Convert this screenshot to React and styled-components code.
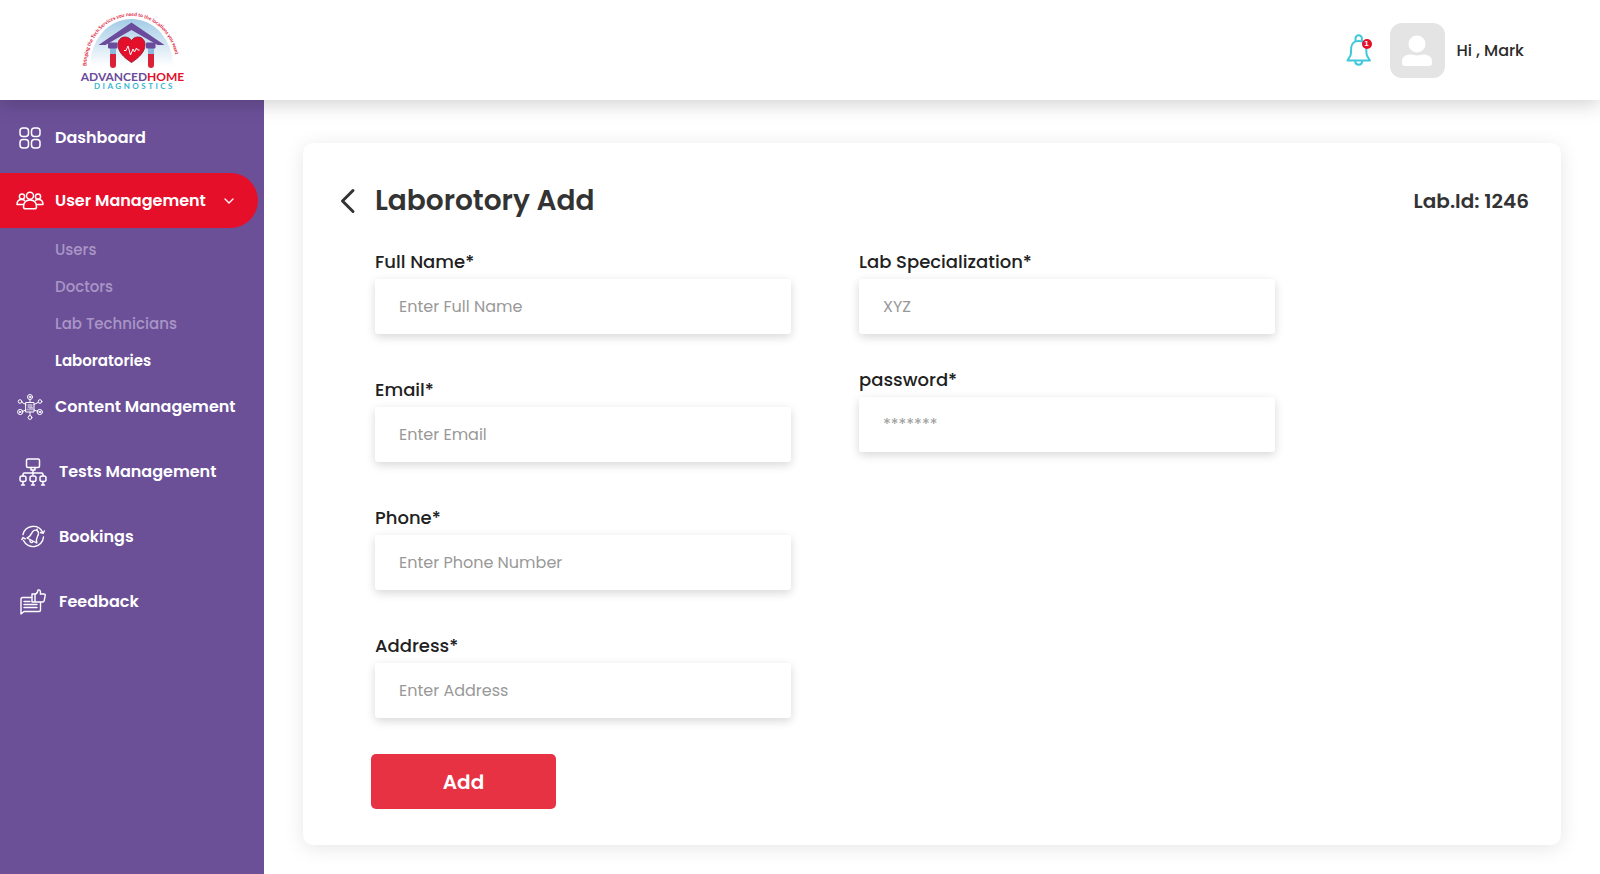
import React from "react";
import styled, { createGlobalStyle, css } from "styled-components";

const GlobalStyle = createGlobalStyle`
  *, *::before, *::after { box-sizing: border-box; }
  body {
    margin: 0;
    background: #fff;
    font-family: Poppins, Inter, "Liberation Sans", sans-serif;
    color: #212121;
  }
`;

const Page = styled.div`
  display: flex;
  flex-direction: column;
  min-height: 100vh;
`;

const TopBar = styled.header`
  position: relative;
  z-index: 1;
  display: flex;
  align-items: center;
  justify-content: space-between;
  height: 100px;
  padding: 0 76px 0 80px;
  background: #fff;
  box-shadow: 0 3px 20px rgba(0, 0, 0, 0.2);
`;

const LogoLink = styled.a`
  display: block;
  svg { display: block; }
`;

const Account = styled.div`
  display: flex;
  align-items: center;
`;

const BellButton = styled.button`
  position: relative;
  display: flex;
  margin-right: 18px;
  padding: 0;
  border: 0;
  background: none;
`;

const Badge = styled.span`
  position: absolute;
  top: 5px;
  right: 0;
  width: 10px;
  height: 10px;
  border-radius: 50%;
  background: #e60f29;
  color: #fff;
  font-size: 8px;
  font-weight: 700;
  line-height: 10px;
  text-align: center;
`;

const Avatar = styled.div`
  display: flex;
  align-items: center;
  justify-content: center;
  width: 55px;
  height: 55px;
  margin-right: 12px;
  border-radius: 12px;
  background: #e4e4e4;
`;

const Greeting = styled.span`
  padding-top: 2px;
  font-size: 16px;
  font-weight: 500;
  line-height: 24px;
  color: #2b2b2b;
`;

const Body = styled.div`
  display: flex;
  flex: 1;
`;

const Sidebar = styled.nav`
  flex: none;
  width: 264px;
  padding-top: 10px;
  background: #6b5098;
`;

const NavList = styled.ul`
  display: flex;
  flex-direction: column;
  gap: ${(p) => p.$gap}px;
  margin: 0;
  padding: 0;
  list-style: none;
`;

const NavLink = styled.a`
  display: flex;
  align-items: center;
  gap: ${(p) => (p.$inset ? 12 : 11)}px;
  height: 55px;
  margin-right: 6px;
  padding-left: ${(p) => (p.$inset ? 19 : 16)}px;
  border-radius: 0 28px 28px 0;
  color: #fff;
  font-size: 16px;
  font-weight: 600;
  text-decoration: none;
  white-space: nowrap;
  ${(p) => p.$active && css`background: #e60f29;`}
`;

const IconSlot = styled.span`
  display: flex;
  justify-content: center;
  flex: none;
  width: 28px;
`;

const Caret = styled.svg`
  margin: 0 24px 0 auto;
`;

const SubList = styled.ul`
  margin: 0;
  padding: 3px 0 0 55px;
  list-style: none;
`;

const SubLink = styled.a`
  display: block;
  color: ${(p) => (p.$current ? "#fff" : "#a996c6")};
  font-size: 15px;
  font-weight: ${(p) => (p.$current ? 600 : 500)};
  line-height: 37px;
  text-decoration: none;
`;

const Main = styled.main`
  flex: 1;
  min-width: 0;
  padding: 43px 39px 29px;
`;

const Card = styled.section`
  padding: 37px 32px 36px 36px;
  border-radius: 10px;
  background: #fff;
  box-shadow: 0 3px 20px rgba(0, 0, 0, 0.1);
`;

const CardHead = styled.div`
  display: flex;
  align-items: center;
  margin-bottom: 26px;
`;

const BackButton = styled.button`
  display: flex;
  align-items: center;
  width: 36px;
  height: 42px;
  padding: 0;
  border: 0;
  background: none;
`;

const Title = styled.h1`
  flex: 1;
  margin: 0;
  color: #333;
  font-size: 28px;
  font-weight: 600;
  line-height: 42px;
`;

const LabId = styled.span`
  color: #333;
  font-size: 20px;
  font-weight: 600;
  line-height: 30px;
`;

const Form = styled.form`
  padding-left: 32px;
`;

const Columns = styled.div`
  display: grid;
  grid-template-columns: repeat(2, minmax(0, 416px));
  gap: 68px;
  padding-left: 4px;
`;

const Column = styled.div`
  display: flex;
  flex-direction: column;
  gap: ${(p) => p.$gap}px;
`;

const FieldBox = styled.div`
  display: flex;
  flex-direction: column;
  gap: 4px;
`;

const Label = styled.label`
  color: #212121;
  font-size: 18px;
  font-weight: 500;
  line-height: 27px;
`;

const Input = styled.input`
  width: 100%;
  height: 55px;
  padding: 0 24px;
  border: 0;
  border-radius: 3px;
  background: #fff;
  box-shadow: 0 3px 10px rgba(0, 0, 0, 0.16);
  color: #212121;
  font-family: inherit;
  font-size: 16px;
  &::placeholder { color: #999; opacity: 1; }
`;

const SubmitButton = styled.button`
  display: block;
  width: 185px;
  height: 55px;
  margin-top: 36px;
  border: 0;
  border-radius: 5px;
  background: #e73244;
  color: #fff;
  font-family: inherit;
  font-size: 20px;
  font-weight: 600;
`;

const Logo = () => (
  <svg width="106" height="84" viewBox="0 0 106 84" overflow="visible" role="img" aria-label="Advanced Home Diagnostics">
    <defs>
      <linearGradient id="dome" x1="0" y1="0" x2="0" y2="1">
        <stop offset="0" stopColor="#a3cbe6" />
        <stop offset="1" stopColor="#fff" />
      </linearGradient>
      <path id="arc" d="M6.500 58 A 45 50 0 0 1 96.500 58" />
    </defs>
    <path d="M10 58a41.500 47 0 0 1 83 0z" fill="url(#dome)" />
    <text fill="#e0213c" fontFamily="Lato, sans-serif" fontSize="5" fontWeight="700">
      <textPath href="#arc">Bringing the Tech Services you need to the locations you want</textPath>
    </text>
    <path d="M51.500 14.500L84.500 37h-7L51.500 22 25.500 37h-7z" fill="#6a4b9c" />
    {[28, 66].map((x) => (
      <g key={x}>
        <path d={`M${x + 2} 40h6v17a3 3 0 0 1-6 0z`} fill="#d92238" />
        <path d={`M${x + 2} 40h6v6h-6z`} fill="#8cb9de" />
        <rect x={x} y="34.500" width="9.500" height="6" rx="1" fill="#6a4b9c" />
      </g>
    ))}
    <path d="M51.500 54.500C44 49.500 38 44 38 36.500 38 28.500 47.500 26.500 51.500 32.500 55.500 26.500 65 28.500 65 36.500 65 44 59 49.500 51.500 54.500z" fill="#e30f2b" stroke="#9c2038" />
    <path d="M44 42.500h2l2-4.500 2.500 9 2.500-6 1.500 3 2-4 1 2h2" fill="none" stroke="#fff" />
    <text x="52.500" y="73" textAnchor="middle" fontFamily="Lato, sans-serif" fontSize="12" fontWeight="700" fill="#6a4b9c">
      ADVANCED<tspan fill="#e30f2b">HOME</tspan>
    </text>
    <text x="54.500" y="81" textAnchor="middle" fontFamily="Lato, sans-serif" fontSize="8" fontWeight="700" letterSpacing="2.500" fill="#38b6cf">
      DIAGNOSTICS
    </text>
  </svg>
);

const BellIcon = () => (
  <svg width="26" height="32" viewBox="0 0 26 32" fill="none" stroke="#3fc8da" strokeWidth="2" strokeLinejoin="round">
    <path d="M9.500 7V4.500a3.200 3.200 0 0 1 6.400 0V7" />
    <path d="M1.500 26.500l3-5c.7-2 .5-5 .7-8C5.500 9.500 8.500 7 12.700 7s7.200 2.500 7.500 6.500c.2 3 0 6 .7 8l3 5z" />
    <path d="M9 27c.4 2.400 1.800 3.700 3.700 3.700s3.300-1.300 3.700-3.700" />
  </svg>
);

const PersonIcon = () => (
  <svg width="30" height="31" viewBox="0 0 30 31" fill="#fff">
    <circle cx="15" cy="9" r="8.500" />
    <path d="M0 26.500C0 21.500 4 19.500 8.500 19.500c2 0 3.500 1 6.500 1s4.500-1 6.500-1C26 19.500 30 21.500 30 26.500V28c0 2-1 3-3 3H3c-2 0-3-1-3-3z" />
  </svg>
);

const stroke = { fill: "none", stroke: "#fff", strokeLinecap: "round", strokeLinejoin: "round" };

const DashboardIcon = () => (
  <svg width="22" height="22" viewBox="0 0 22 22" {...stroke} strokeWidth="1.500">
    <rect x="1" y="1" width="8.500" height="8.500" rx="3" />
    <rect x="12.500" y="1" width="8.500" height="8.500" rx="3" />
    <rect x="1" y="12.500" width="8.500" height="8.500" rx="3" />
    <rect x="12.500" y="12.500" width="8.500" height="8.500" rx="3" />
  </svg>
);

const UsersIcon = () => (
  <svg width="28" height="20" viewBox="0 0 28 20" {...stroke} strokeWidth="1.500">
    <circle cx="14" cy="4.800" r="3.500" />
    <circle cx="6" cy="5.500" r="2.600" />
    <circle cx="22" cy="5.500" r="2.600" />
    <path d="M7.500 16c0-5 2.500-7 6.500-7s6.500 2 6.500 7c0 1.200-.8 1.800-2 1.800h-9c-1.200 0-2-.6-2-1.800z" />
    <path d="M6.500 13.500H1c0-3.500 1.700-5 4.700-5 1.200 0 2 .2 2.800.8M21.500 13.500H27c0-3.500-1.700-5-4.700-5-1.200 0-2 .2-2.800.8" />
  </svg>
);

const ContentIcon = () => (
  <svg width="26" height="26" viewBox="0 0 26 26" {...stroke} strokeWidth="1">
    <rect x="9" y="8.500" width="8" height="9.500" />
    <path d="M11 11h4M11 13h4M11 16v-1M13 16v-2M15 16v-2.500M13 5.500v3M13 18v3.500M9 10.500L5 8.500M17 10.500l4-2M9 16l-4 1.500M17 16l4 1.500" />
    <circle cx="13" cy="3" r="2.500" />
    <circle cx="13" cy="3" r="0.800" />
    <circle cx="13" cy="23.500" r="1.900" />
    <circle cx="3" cy="7.500" r="1.800" />
    <circle cx="23" cy="7.500" r="1.800" />
    <circle cx="3.200" cy="18" r="2.600" />
    <circle cx="22.800" cy="18" r="2.600" />
    <path d="M2.300 17.200l1.800 1.600M4.100 17.200l-1.800 1.600M21.900 17.200l1.800 1.600M23.700 17.200l-1.800 1.600" />
  </svg>
);

const TestsIcon = () => (
  <svg width="28" height="28" viewBox="0 0 28 28" {...stroke} strokeWidth="1.500">
    <rect x="7.500" y="1" width="13" height="8.500" rx="1.500" />
    <path d="M12 9.500v2.500h4V9.500M14 12v5M4 18v-1.500c0-1 .5-1.500 1.500-1.500h17c1 0 1.500.5 1.500 1.500V18" />
    {[4, 14, 24].map((x) => (
      <g key={x}>
        <rect x={x - 3} y="18" width="6" height="5.500" rx="2" />
        <path d={`M${x} 23.500v2.500M${x - 1.500} 27h3`} />
      </g>
    ))}
  </svg>
);

const BookingsIcon = () => (
  <svg width="24" height="24" viewBox="0 0 24 24" {...stroke} strokeWidth="1.400">
    <path d="M2 9.500A10.500 10.500 0 0 1 21.500 7M22.500 12A10.500 10.500 0 0 1 2.500 15.500" />
    <path d="M19.500 7.500l2.700.8L23.300 6M.8 14.500l1.300-2 2.200 1.300" />
    <path d="M6 13c4.500-1.500 4-5.500 6.500-7.300 1-.7 2.500-.7 3.600-.1 1.100.7 1.700 2 1.400 3.400-.7 3-3.300 4.300-1.700 9z" />
    <path d="M15.500 5.300l.8-1.300M9 15.500c-.3 1.700 1.700 2.700 2.800 1.300" />
  </svg>
);

const FeedbackIcon = () => (
  <svg width="26" height="26" viewBox="0 0 26 26" {...stroke} strokeWidth="1.400">
    <path d="M11.500 8.500H2.500c-1 0-1.500.5-1.500 1.500v15l3-2.500h15c1 0 1.500-.5 1.500-1.500v-7.500" />
    <path d="M4 12.500h6M4 15.500h13M4 18.500h13" />
    <path d="M12 5h3v8h-3zM15 5.500c2-.8 2.800-2 3-4.500 2-.5 2.800 1 2.300 4H24c1 0 1.400.7 1.200 1.700l-1 5c-.2 1-.7 1.300-1.700 1.300H15" />
  </svg>
);

const leftFields = [
  { id: "fullName", label: "Full Name*", placeholder: "Enter Full Name", type: "text" },
  { id: "email", label: "Email*", placeholder: "Enter Email", type: "email" },
  { id: "phone", label: "Phone*", placeholder: "Enter Phone Number", type: "tel" },
  { id: "address", label: "Address*", placeholder: "Enter Address", type: "text" },
];

const rightFields = [
  { id: "specialization", label: "Lab Specialization*", placeholder: "XYZ", type: "text" },
  { id: "password", label: "password*", placeholder: "*******", type: "password" },
];

const Field = ({ id, label, placeholder, type }) => (
  <FieldBox>
    <Label htmlFor={id}>{label}</Label>
    <Input id={id} name={id} type={type} placeholder={placeholder} />
  </FieldBox>
);

const NavItem = ({ icon: Icon, label, active, inset, children }) => (
  <li>
    <NavLink href="#" $active={active} $inset={inset}>
      <IconSlot><Icon /></IconSlot>
      {label}
      {active && (
        <Caret width="10" height="6" viewBox="0 0 10 6" {...stroke} strokeWidth="1.300">
          <path d="M1 1l4 4 4-4" />
        </Caret>
      )}
    </NavLink>
    {children}
  </li>
);

const subPages = ["Users", "Doctors", "Lab Technicians", "Laboratories"];

export default function App() {
  return (
    <Page>
      <GlobalStyle />
      <TopBar>
        <LogoLink href="#"><Logo /></LogoLink>
        <Account>
          <BellButton type="button" aria-label="Notifications">
            <BellIcon />
            <Badge>1</Badge>
          </BellButton>
          <Avatar><PersonIcon /></Avatar>
          <Greeting>Hi , Mark</Greeting>
        </Account>
      </TopBar>
      <Body>
        <Sidebar>
          <NavList $gap={8}>
            <NavItem icon={DashboardIcon} label="Dashboard" />
            <NavItem icon={UsersIcon} label="User Management" active>
              <SubList>
                {subPages.map((name) => (
                  <li key={name}>
                    <SubLink href="#" $current={name === "Laboratories"}>{name}</SubLink>
                  </li>
                ))}
              </SubList>
            </NavItem>
          </NavList>
          <NavList $gap={10}>
            <NavItem icon={ContentIcon} label="Content Management" />
            <NavItem icon={TestsIcon} label="Tests Management" inset />
            <NavItem icon={BookingsIcon} label="Bookings" inset />
            <NavItem icon={FeedbackIcon} label="Feedback" inset />
          </NavList>
        </Sidebar>
        <Main>
          <Card>
            <CardHead>
              <BackButton type="button" aria-label="Back">
                <svg width="18" height="26" viewBox="0 0 18 26" fill="none" stroke="#333" strokeWidth="3" strokeLinecap="round" strokeLinejoin="round">
                  <path d="M14 2.500L3.500 13 14 23.500" />
                </svg>
              </BackButton>
              <Title>Laborotory Add</Title>
              <LabId>Lab.Id: 1246</LabId>
            </CardHead>
            <Form>
              <Columns>
                <Column $gap={42}>
                  {leftFields.map((f) => <Field key={f.id} {...f} />)}
                </Column>
                <Column $gap={32}>
                  {rightFields.map((f) => <Field key={f.id} {...f} />)}
                </Column>
              </Columns>
              <SubmitButton type="button">Add</SubmitButton>
            </Form>
          </Card>
        </Main>
      </Body>
    </Page>
  );
}
